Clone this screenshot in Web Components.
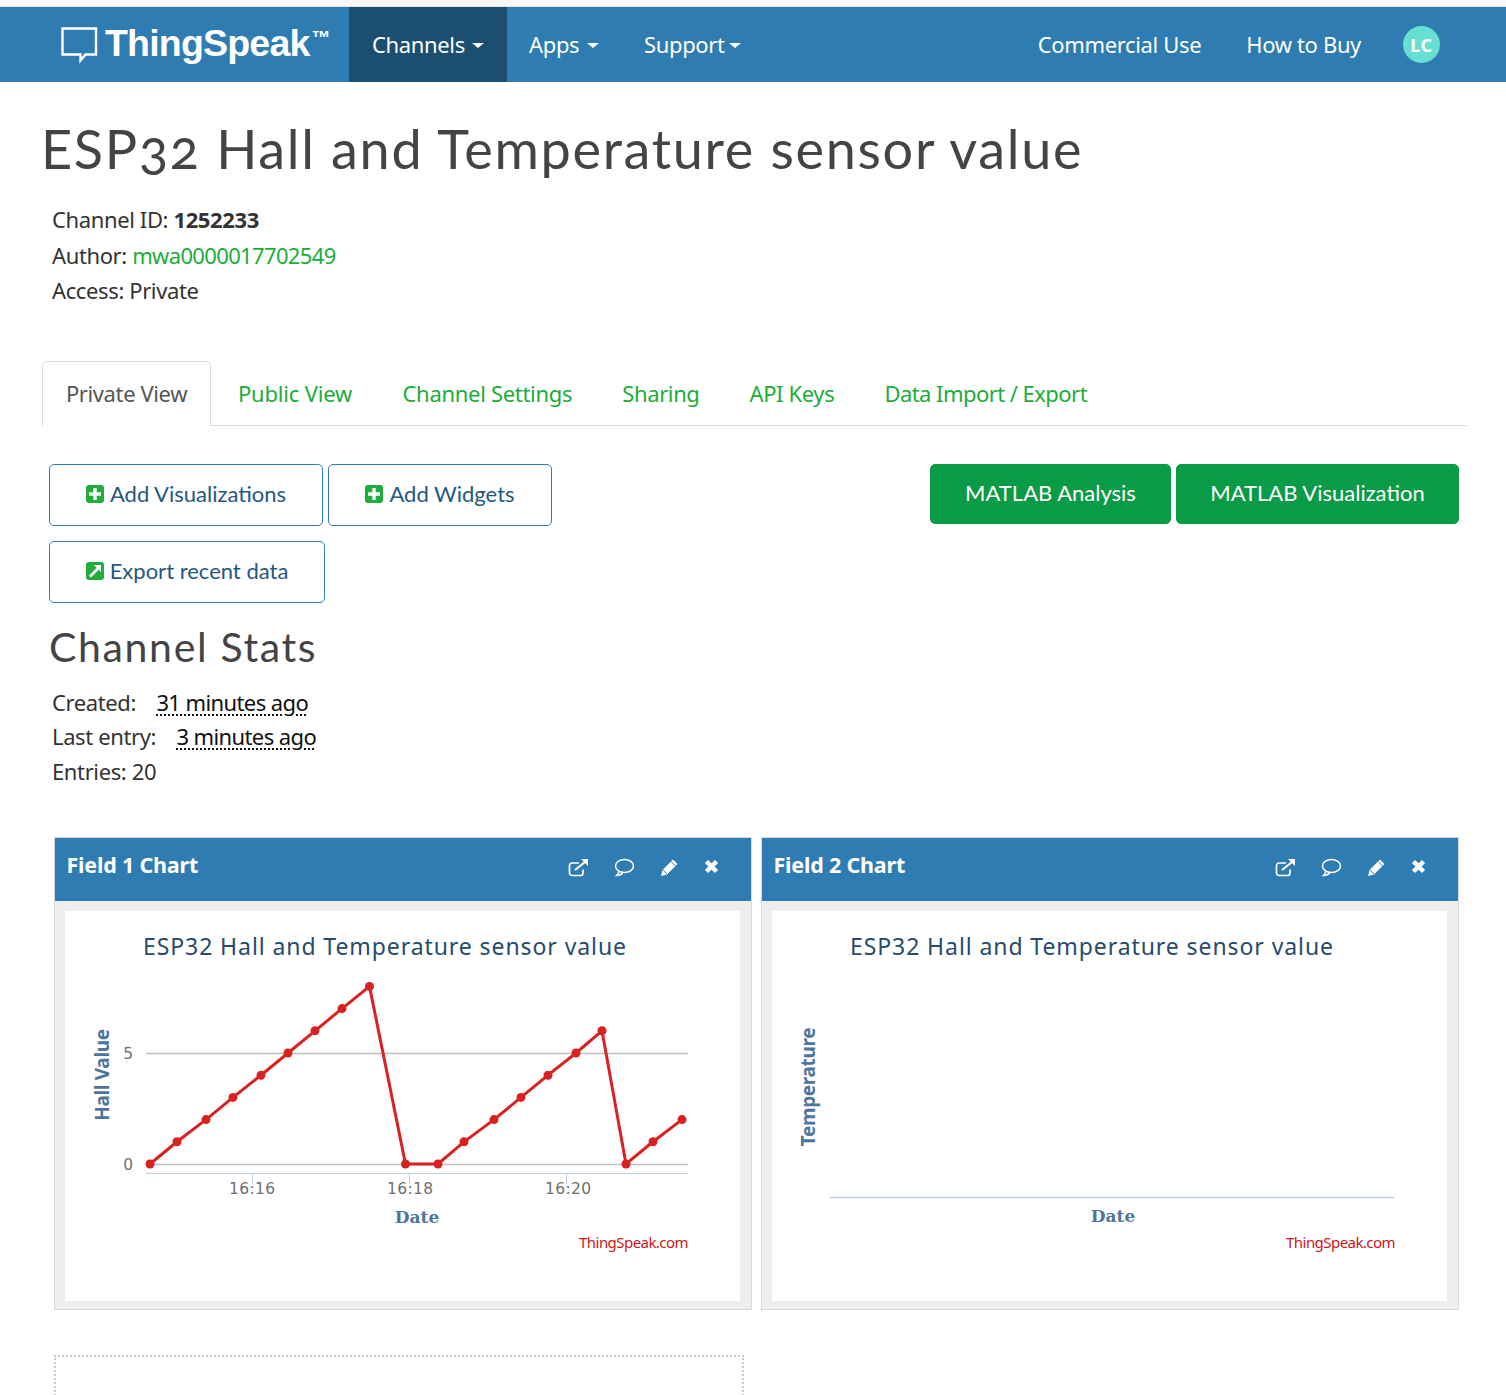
<!DOCTYPE html>
<html><head><meta charset="utf-8"><title>ThingSpeak</title>
<style>
html,body{margin:0;padding:0;background:#fff;}
body{font-family:"Noto Sans",sans-serif;color:#333;overflow:hidden;height:1395px;}
</style></head><body>
<ts-nav></ts-nav>
<ts-page></ts-page>
<script>
const SANS='"Noto Sans",sans-serif';
const HEAD='Lato,sans-serif';
class TsNav extends HTMLElement{constructor(){super();this.attachShadow({mode:'open'}).innerHTML=`<style>
:host{display:block;background:#f8f8f8;padding-top:6px;font-family:${SANS};}
.bar{border-top:1px solid #e3e3e3;height:75px;background:#2e7cb1;display:flex;align-items:stretch;color:#fff;font-size:22px;letter-spacing:-.35px;}
.logo{width:288px;margin-left:61px;display:flex;align-items:center;gap:7px;font:bold 37.5px "Liberation Sans",sans-serif;letter-spacing:-.8px;}
.logo svg{flex:none;margin-top:0}
.logo span{margin-top:-2px;white-space:nowrap}
.logo sup{font-size:19px;font-weight:bold;vertical-align:12px;line-height:0;letter-spacing:0;margin-left:2px}
a{display:flex;align-items:center;white-space:nowrap;color:#fff;text-decoration:none;padding-bottom:2px}
a i{display:inline-block;border-top:5px solid #fff;border-left:6px solid transparent;border-right:6px solid transparent;margin-left:7px;margin-top:3px}
.c{width:158px;padding-left:23px;box-sizing:border-box;background:#1c4e70}
.apps{width:137px;padding-left:22px;box-sizing:border-box}
.apps i{margin-left:8px}
.sup i{margin-left:4px}
.sp{flex:1}
.buy{margin-left:45px}
.av{width:37px;height:37px;border-radius:50%;background:#66e0d2;margin:19px 66px 0 42px;display:flex;align-items:center;justify-content:center;font:bold 18px "Noto Sans",sans-serif;letter-spacing:.5px;}
</style><div class="bar">
<div class="logo"><svg width="37" height="38" viewBox="0 0 37 38"><path d="M1.500 2.500h33.500v26H24.500l-5 6v-6H1.500z" fill="none" stroke="#fff" stroke-width="2.400"/></svg><span>ThingSpeak<sup>™</sup></span></div>
<a class="c">Channels<i></i></a><a class="apps">Apps<i></i></a><a class="sup">Support<i></i></a>
<div class="sp"></div><a>Commercial Use</a><a class="buy">How to Buy</a><div class="av">LC</div>
</div>`}}
customElements.define('ts-nav',TsNav);

class TsTabs extends HTMLElement{constructor(){super();this.attachShadow({mode:'open'}).innerHTML=`<style>
:host{display:flex;height:65px;box-sizing:border-box;border-bottom:1px solid #ddd;margin:0 39px 0 42px;font:22px ${SANS};letter-spacing:-.38px;color:#1cad39}
div{display:flex;align-items:center;white-space:nowrap;margin-bottom:-1px;padding-bottom:1px}
.on{width:169px;box-sizing:border-box;justify-content:center;border:1px solid #ddd;border-bottom:0;border-radius:5px 5px 0 0;color:#555;background:#fff;padding-bottom:3px}
.t1{margin-left:27px;letter-spacing:-.2px}.t2{margin-left:50px}.t3{margin-left:50.500px;letter-spacing:-.3px}.t4{letter-spacing:-.55px}
</style><div class="on">Private View</div><div class="t1">Public View</div><div class="t3">Channel Settings</div><div class="t2">Sharing</div><div class="t2">API Keys</div><div class="t2 t4">Data Import / Export</div>`}}
customElements.define('ts-tabs',TsTabs);

class TsBtn extends HTMLElement{constructor(){super();
const ic=this.getAttribute('icon');
const g=ic=='plus'?'<path d="M9 3v12M3 9h12" stroke="#fff" stroke-width="3.400"/>':'<path d="M4 14.500l8-8" stroke="#fff" stroke-width="2.800"/><path d="M8 3h7v7z" fill="#fff"/>';
this.attachShadow({mode:'open'}).innerHTML=`<style>
:host{display:inline-flex;align-items:center;justify-content:center;box-sizing:border-box;height:62px;border:1px solid #2e7cb1;border-radius:5px;background:#fff;color:#25587f;font:400 22px/30px ${HEAD};letter-spacing:0;gap:6px;white-space:nowrap}
:host([solid]){height:60px;background:#0a9b46;border-color:#0a9b46;color:#fff}
svg{flex:none;margin-top:-2px}
span{margin-top:-2px}
</style>${ic?`<svg width="18" height="18" viewBox="0 0 18 18"><rect width="18" height="18" rx="3" fill="#1fae3c"/>${g}</svg>`:''}<span><slot></slot></span>`}}
customElements.define('ts-btn',TsBtn);

const ICONS=`<svg class="i" style="left:513px" width="22" height="20" viewBox="0 0 22 20"><path d="M15 11.500v3.500a2.500 2.500 0 0 1-2.500 2.500H4A2.500 2.500 0 0 1 1.500 15V7.500A2.500 2.500 0 0 1 4 5h7" fill="none" stroke="#fff" stroke-width="1.700"/><path d="M7 12l10-8" stroke="#fff" stroke-width="2.200"/><path d="M13 1h7v7z" fill="#fff"/></svg>
<svg class="i" style="left:559px" width="21" height="19" viewBox="0 0 21 19"><ellipse cx="10.500" cy="8" rx="9" ry="6.500" fill="none" stroke="#fff" stroke-width="1.500"/><path d="M5 13c0 2-1 3-2.500 4.500 3 0 5-1 6.500-3" fill="none" stroke="#fff" stroke-width="1.500"/></svg>
<svg class="i" style="left:605px" width="19" height="19" viewBox="0 0 19 19"><path d="M13 1.500l4.500 4.500-10.500 10.500-6 1.500 1.500-6z" fill="#fff"/><path d="M11 3.500l4.500 4.500M3 12l4 4" stroke="#2e7cb1" stroke-width="1"/></svg>
<svg class="i" style="left:649px;margin-top:1px" width="15" height="15" viewBox="0 0 15 15"><path d="M2.500 2.500l10 10M12.500 2.500l-10 10" stroke="#fff" stroke-width="4.500"/></svg>`;
class TsPanel extends HTMLElement{constructor(){super();this.attachShadow({mode:'open'}).innerHTML=`<style>
:host{display:block;box-sizing:border-box;height:473px;border:1px solid #d8d8d8;background:#eee;font-family:${SANS}}
.h{height:63px;background:#2e7cb1;color:#fff;position:relative;display:flex;align-items:center;padding-left:11.500px;font-weight:700;font-size:21.500px;letter-spacing:-.2px;padding-bottom:9px;box-sizing:border-box}
.i{position:absolute;top:20px}
.b{margin:10px 11px 0 10px;height:390px;background:#fff}
</style><div class="h"><slot name="title"></slot>${ICONS}</div><div class="b"><slot></slot></div>`}}
customElements.define('ts-panel',TsPanel);

class TsChart extends HTMLElement{constructor(){super();
const data=this.hasAttribute('data');
let body='';
const xf=x=>x-65,yf=y=>y-911;
if(data){
const xs=[150,177,206,233,261,288,315,342,369.500,405.500,438,464,494,521,548,576,602,626,653,682];
const v=[0,1,2,3,4,5,6,7,8,0,0,1,2,3,4,5,6,0,1,2];
const pts=xs.map((x,i)=>[xf(x),yf(1164-v[i]*22.200)]);
body=`<path d="M81 142.500H623M81 253.500H623" stroke="#c0c0c0" stroke-width="1.500"/>
<path d="M81 262.500H623" stroke="#c0d0e0" stroke-width="1"/><path d="M187.500 263v10M344.500 263v10M501.500 263v10" stroke="#c0d0e0"/>
<polyline points="${pts.map(p=>p.join(',')).join(' ')}" fill="none" stroke="#d92121" stroke-width="3"/>
${pts.map(p=>`<circle cx="${p[0]}" cy="${p[1]}" r="4.500" fill="#d92121"/>`).join('')}
<g font-family="'DejaVu Sans',sans-serif" font-size="15.500" fill="#707070" letter-spacing="0"><text x="68" y="148" text-anchor="end">5</text><text x="68" y="259" text-anchor="end">0</text>
<text x="187" y="283" text-anchor="middle" textLength="46">16:16</text><text x="345" y="283" text-anchor="middle" textLength="46">16:18</text><text x="503" y="283" text-anchor="middle" textLength="46">16:20</text></g>
<text x="352" y="312" text-anchor="middle" class="ax">Date</text>
<text transform="translate(44,164) rotate(-90)" text-anchor="middle" class="ay">Hall Value</text>`;
}else{
body=`<path d="M58 286.500H622" stroke="#c0d0e0" stroke-width="1.500"/>
<text x="341" y="311" text-anchor="middle" class="ax">Date</text>
<text transform="translate(43,176) rotate(-90)" text-anchor="middle" class="ay">Temperature</text>`;
}
this.attachShadow({mode:'open'}).innerHTML=`<style>
:host{display:block}svg{display:block}
.t{font:23px ${SANS};fill:#274b6d;letter-spacing:0}
.ax{font:bold 17px "DejaVu Serif",serif;fill:#4d759e;letter-spacing:0}
.ay{font:bold 19px ${SANS};fill:#4d759e;letter-spacing:-.35px}
.c{font:15px ${SANS};fill:#d01616;letter-spacing:-.55px}
</style><svg width="675" height="390" viewBox="0 0 675 390"><text class="t" x="78" y="44" textLength="483">ESP32 Hall and Temperature sensor value</text>${body}<text class="c" x="623" y="337" text-anchor="end">ThingSpeak.com</text></svg>`}}
customElements.define('ts-chart',TsChart);

class TsPage extends HTMLElement{constructor(){super();this.attachShadow({mode:'open'}).innerHTML=`<style>
:host{display:block;font:22px/35.500px ${SANS};letter-spacing:-.38px;color:#333}
h1{margin:35px 0 0 41px;font:400 54px/64px ${HEAD};letter-spacing:1.680px;color:#444;font-variant-numeric:oldstyle-nums;white-space:nowrap}
.info{margin:21px 0 0 52px;height:107px}
.info b{font-weight:700;color:#333}.info a{color:#1cad39;letter-spacing:-.65px}
.tabw{margin-top:52px}
.btns{margin:38px 47px 0 49px;display:flex;gap:5px}
.sp{flex:1}
.b2{margin:15px 0 0 49px;display:flex}
h2{margin:19px 0 0 49px;font:400 41px/50px ${HEAD};letter-spacing:1.650px;color:#444}
.stats{margin:13px 0 0 52px;line-height:34.400px}
.stats u{color:#111;text-decoration:underline dotted;text-underline-offset:3px;margin-left:15px;letter-spacing:-.6px}
.panels{margin:49px 47px 0 54px;display:grid;grid-template-columns:698px 698px;gap:9px}
.dot{margin:45px 0 0 54px;width:690px;height:60px;box-sizing:border-box;border:2px dotted #ccc}
</style>
<h1>ESP32 Hall and Temperature sensor value</h1>
<div class="info">Channel ID: <b>1252233</b><br>Author: <a>mwa0000017702549</a><br>Access: Private</div>
<div class="tabw"><ts-tabs></ts-tabs></div>
<div class="btns"><ts-btn icon="plus" style="width:274px">Add Visualizations</ts-btn><ts-btn icon="plus" style="width:224px">Add Widgets</ts-btn><div class="sp"></div><ts-btn solid style="width:241px">MATLAB Analysis</ts-btn><ts-btn solid style="width:283px">MATLAB Visualization</ts-btn></div>
<div class="b2"><ts-btn icon="ext" style="width:276px">Export recent data</ts-btn></div>
<h2>Channel Stats</h2>
<div class="stats">Created: <u>31 minutes ago</u><br>Last entry: <u>3 minutes ago</u><br>Entries: 20</div>
<div class="panels"><ts-panel><span slot="title">Field 1 Chart</span><ts-chart data></ts-chart></ts-panel><ts-panel><span slot="title">Field 2 Chart</span><ts-chart></ts-chart></ts-panel></div>
<div class="dot"></div>`}}
customElements.define('ts-page',TsPage);
</script></body></html>
